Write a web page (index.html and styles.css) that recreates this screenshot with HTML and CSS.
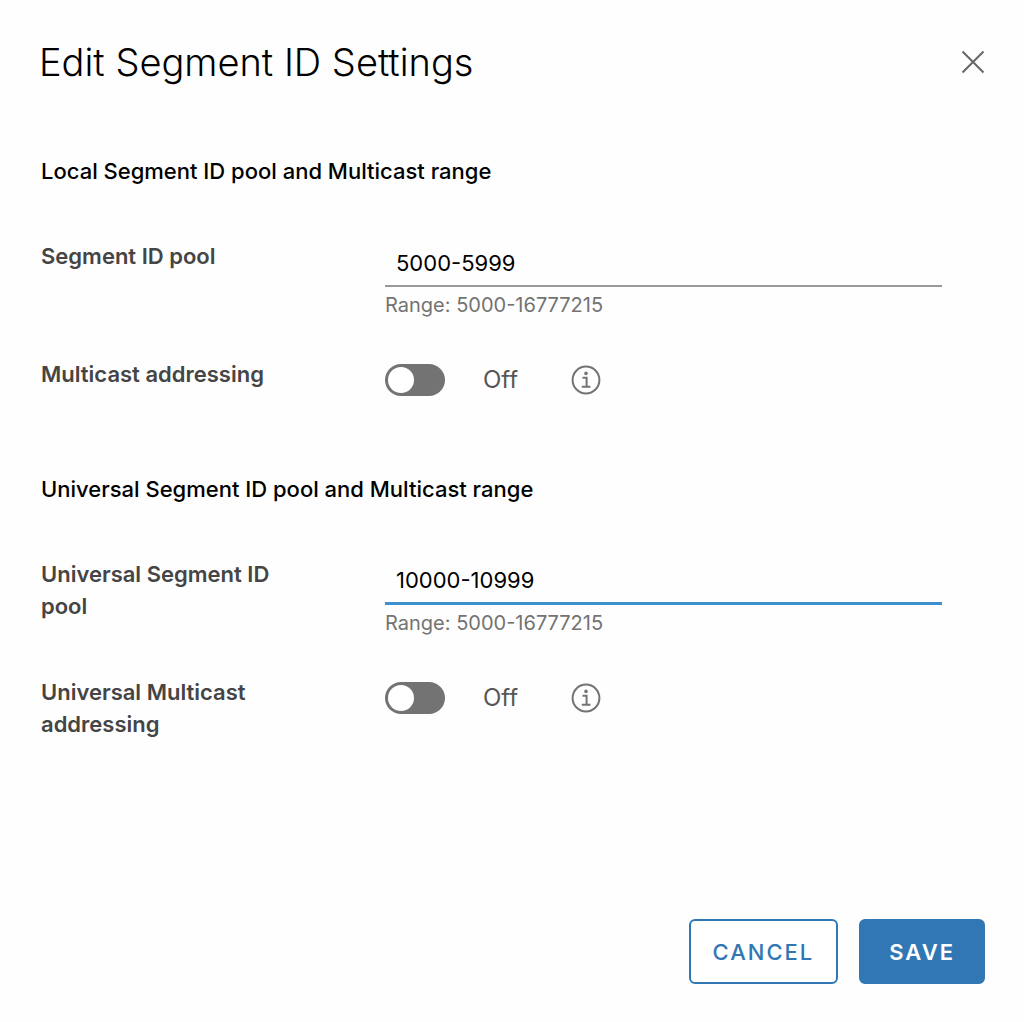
FILE: index.html
```html
<!DOCTYPE html>
<html lang="en">
<head>
    <meta charset="UTF-8">
    <meta name="viewport" content="width=device-width, initial-scale=1.0">
    <title>Edit Segment ID Settings</title>
    <link rel="stylesheet" href="styles.css">
</head>
<body>
    <form class="modal">
        <header class="modal-header">
            <h1>Edit Segment ID Settings</h1>
            <button type="button" class="close" aria-label="Close">
                <svg viewBox="0 0 24 24" width="24" height="24"><path d="M1.5 1.5L22.5 22.5M22.5 1.5L1.5 22.5"/></svg>
            </button>
        </header>

        <main class="modal-body">
            <section>
                <h2>Local Segment ID pool and Multicast range</h2>
                <div class="row">
                    <label for="local-pool">Segment ID pool</label>
                    <div class="field">
                        <input type="text" id="local-pool" class="text-input" value="5000-5999">
                        <p class="hint">Range: 5000-16777215</p>
                    </div>
                </div>
                <div class="row">
                    <label for="local-multicast">Multicast addressing</label>
                    <div class="switch">
                        <input type="checkbox" id="local-multicast" class="toggle">
                        <span class="state">Off</span>
                        <button type="button" class="info" aria-label="Info">
                            <svg viewBox="0 0 30 30" width="30" height="30"><circle cx="15" cy="15" r="13.4"/><path d="M11.5 12.8H15.6V21.6M10.8 21.8H19.4"/><circle class="dot" cx="15" cy="8.4" r="1.8"/></svg>
                        </button>
                    </div>
                </div>
            </section>

            <section>
                <h2>Universal Segment ID pool and Multicast range</h2>
                <div class="row">
                    <label for="universal-pool">Universal Segment ID pool</label>
                    <div class="field">
                        <input type="text" id="universal-pool" class="text-input active" value="10000-10999">
                        <p class="hint">Range: 5000-16777215</p>
                    </div>
                </div>
                <div class="row">
                    <label for="universal-multicast">Universal Multicast addressing</label>
                    <div class="switch">
                        <input type="checkbox" id="universal-multicast" class="toggle">
                        <span class="state">Off</span>
                        <button type="button" class="info" aria-label="Info">
                            <svg viewBox="0 0 30 30" width="30" height="30"><circle cx="15" cy="15" r="13.4"/><path d="M11.5 12.8H15.6V21.6M10.8 21.8H19.4"/><circle class="dot" cx="15" cy="8.4" r="1.8"/></svg>
                        </button>
                    </div>
                </div>
            </section>
        </main>

        <footer class="modal-footer">
            <button type="button" class="btn btn-outline">CANCEL</button>
            <button type="submit" class="btn btn-primary">SAVE</button>
        </footer>
    </form>
</body>
</html>
```
FILE: styles.css
```css
* {
    box-sizing: border-box;
}
body {
    margin: 0;
    background-color: #fefefe;
    color: #000;
    font-family: Inter, "Open Sans", sans-serif;
    font-size: 22px;
    line-height: 32px;
}
button, input {
    font-family: inherit;
    font-size: inherit;
    margin: 0;
}
h1, h2, p {
    margin: 0;
}
.modal {
    display: flex;
    flex-direction: column;
    min-height: 100vh;
    padding: 40px 39px 38px;
}
.modal-header {
    display: flex;
    justify-content: space-between;
    align-items: center;
    margin-bottom: 71px;
}
h1 {
    font-size: 38px;
    line-height: 44px;
    font-weight: 300;
}
.close, .info {
    display: flex;
    padding: 0;
    border: none;
    background: none;
    cursor: pointer;
}
.close path {
    stroke: #666;
    stroke-width: 2;
    fill: none;
}
.modal-body {
    padding: 0 43px 0 2px;
}
section {
    margin-bottom: 77px;
}
h2 {
    font-size: 22px;
    line-height: 32px;
    font-weight: 500;
    margin-bottom: 53px;
}
.row {
    display: grid;
    grid-template-columns: 344px 1fr;
    align-items: start;
}
.row + .row {
    margin-top: 37px;
}
.row label {
    max-width: 270px;
    color: #454545;
    font-weight: 600;
}
.text-input {
    display: block;
    width: 100%;
    height: 47px;
    padding: 0 11px;
    border: none;
    border-bottom: 2px solid #999;
    border-radius: 0;
    background: none;
    color: #000;
    outline: none;
}
.text-input:focus, .text-input.active {
    border-bottom: 3px solid #3c91cd;
}
.hint {
    margin-top: 2px;
    font-size: 20px;
    color: #737373;
}
.switch {
    display: flex;
    align-items: center;
    padding-top: 6px;
}
.toggle {
    appearance: none;
    width: 60px;
    height: 32px;
    padding: 3px;
    border-radius: 16px;
    background-color: #737373;
    cursor: pointer;
}
.toggle::before {
    content: "";
    display: block;
    width: 26px;
    height: 26px;
    border-radius: 50%;
    background-color: #fff;
}
.toggle:checked::before {
    margin-left: auto;
}
.state {
    width: 88px;
    margin-left: 38px;
    font-size: 24px;
    color: #565656;
}
.info svg {
    fill: none;
    stroke: #737373;
    stroke-width: 2;
}
.info .dot {
    fill: #737373;
    stroke: none;
}
.modal-footer {
    display: flex;
    justify-content: flex-end;
    gap: 21px;
    margin-top: auto;
}
.btn {
    height: 65px;
    border: 2px solid #3077b4;
    border-radius: 6px;
    font-weight: 500;
    letter-spacing: 2px;
    cursor: pointer;
}
.btn-outline {
    padding: 0 22px;
    background-color: #fff;
    color: #3077b4;
}
.btn-primary {
    padding: 0 28px;
    background-color: #3077b4;
    color: #fff;
    font-weight: 600;
}
```
